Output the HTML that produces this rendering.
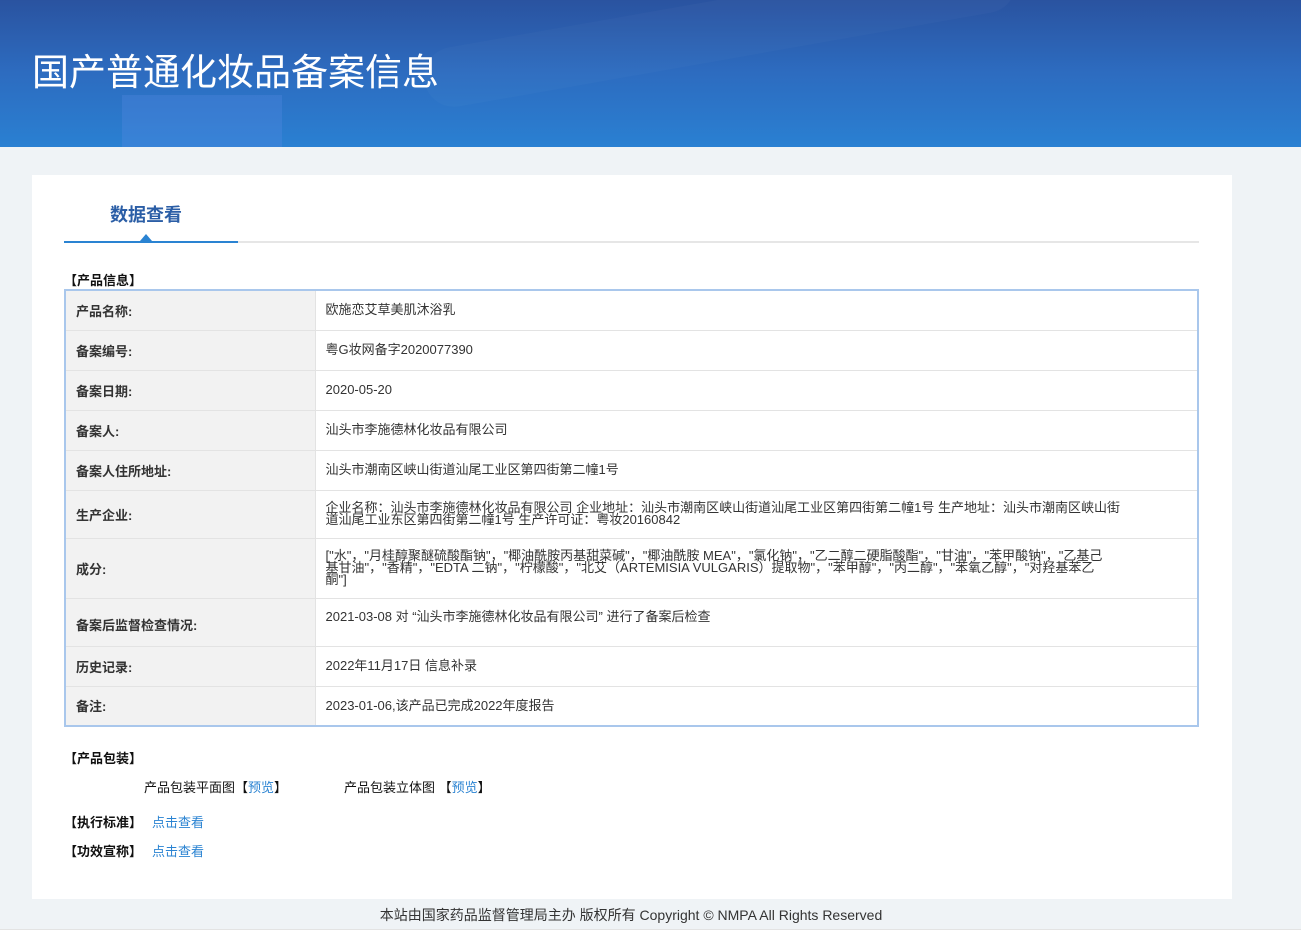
<!DOCTYPE html>
<html><head><meta charset="utf-8"><style>
*{margin:0;padding:0;box-sizing:border-box}
body{width:1301px;height:936px;background:#eff3f6;font-family:"Liberation Sans","Noto Sans CJK SC",sans-serif;position:relative;overflow:hidden;color:#333}
.hdr{position:absolute;left:0;top:0;width:1301px;height:147px;background:linear-gradient(180deg,#2a53a0 0%,#2d6cc0 50%,#2a80d2 100%);overflow:hidden}
.hdr .s1{position:absolute;left:122px;top:95px;width:160px;height:60px;background:rgba(90,140,230,.3)}
.hdr .s2{position:absolute;left:420px;top:0px;width:600px;height:60px;border-radius:30px;background:rgba(255,255,255,.025);transform:rotate(-10deg)}
.hdr h1{position:absolute;left:32px;top:50px;font-size:37px;font-weight:normal;color:#fff;line-height:46px}
.card{position:absolute;left:32px;top:175px;width:1200px;height:724px;background:#fff}
.tab{position:absolute;left:78px;top:26px;font-size:18px;font-weight:bold;color:#2b5ea6}
.line{position:absolute;left:32px;top:66px;width:1135px;height:2px;background:#e6e6e6}
.line b{position:absolute;left:0;top:0;width:174px;height:2px;background:#2a83d2}
.tri{position:absolute;left:108px;top:59px;width:0;height:0;border-left:6px solid transparent;border-right:6px solid transparent;border-bottom:7px solid #2a83d2}
.sec{position:absolute;font-size:13px;font-weight:bold;color:#111}
table{position:absolute;left:32px;top:114px;width:1135px;border-collapse:collapse;border:2px solid #a9c7ec;font-size:13px}
td{border-bottom:1px solid #e3e3e3;padding:0 10px;vertical-align:middle}
td.l{width:250px;background:#f2f2f2;font-weight:bold;color:#333;border-right:1px solid #e3e3e3}
td.v{color:#333;line-height:12px;white-space:nowrap}
a{color:#2a83d2;text-decoration:none}
.t{position:absolute;font-size:13px;color:#111}
.foot{position:absolute;left:0;top:905px;width:1262px;text-align:center;font-size:14px;color:#333}
.bot{position:absolute;left:0;top:929px;width:1301px;height:7px;background:#fff;border-top:1px solid #e3e3e3}
</style></head><body>
<div class="hdr"><div class="s2"></div><div class="s1"></div><h1>国产普通化妆品备案信息</h1></div>
<div class="card">
<div class="tab">数据查看</div>
<div class="line"><b></b></div><div class="tri"></div>
<div class="sec" style="left:32px;top:95px">【产品信息】</div>
<table>
<tr style="height:40px"><td class="l">产品名称:</td><td class="v">欧施恋艾草美肌沐浴乳</td></tr>
<tr style="height:40px"><td class="l">备案编号:</td><td class="v">粤G妆网备字2020077390</td></tr>
<tr style="height:40px"><td class="l">备案日期:</td><td class="v">2020-05-20</td></tr>
<tr style="height:40px"><td class="l">备案人:</td><td class="v">汕头市李施德林化妆品有限公司</td></tr>
<tr style="height:40px"><td class="l">备案人住所地址:</td><td class="v">汕头市潮南区峡山街道汕尾工业区第四街第二幢1号</td></tr>
<tr style="height:48px"><td class="l">生产企业:</td><td class="v">企业名称：汕头市李施德林化妆品有限公司 企业地址：汕头市潮南区峡山街道汕尾工业区第四街第二幢1号 生产地址：汕头市潮南区峡山街<br>道汕尾工业东区第四街第二幢1号 生产许可证：粤妆20160842</td></tr>
<tr style="height:60px"><td class="l">成分:</td><td class="v">["水"，"月桂醇聚醚硫酸酯钠"，"椰油酰胺丙基甜菜碱"，"椰油酰胺 MEA"，"氯化钠"，"乙二醇二硬脂酸酯"，"甘油"，"苯甲酸钠"，"乙基己<br>基甘油"，"香精"，"EDTA 二钠"，"柠檬酸"，"北艾（ARTEMISIA VULGARIS）提取物"，"苯甲醇"，"丙二醇"，"苯氧乙醇"，"对羟基苯乙<br>酮"]</td></tr>
<tr style="height:48px"><td class="l" style="padding-top:4px">备案后监督检查情况:</td><td class="v" style="vertical-align:top;padding-top:12px">2021-03-08 对 “汕头市李施德林化妆品有限公司” 进行了备案后检查</td></tr>
<tr style="height:40px"><td class="l">历史记录:</td><td class="v">2022年11月17日 信息补录</td></tr>
<tr style="height:40px"><td class="l">备注:</td><td class="v">2023-01-06,该产品已完成2022年度报告</td></tr>
</table>
<div class="sec" style="left:32px;top:573px">【产品包装】</div>
<div class="t" style="left:112px;top:602px">产品包装平面图【<a>预览</a>】</div>
<div class="t" style="left:312px;top:602px">产品包装立体图 【<a>预览</a>】</div>
<div class="sec" style="left:32px;top:637px">【执行标准】<a style="font-weight:normal;margin-left:10px">点击查看</a></div>
<div class="sec" style="left:32px;top:666px">【功效宣称】<a style="font-weight:normal;margin-left:10px">点击查看</a></div>
</div>
<div class="foot">本站由国家药品监督管理局主办 版权所有 Copyright © NMPA All Rights Reserved</div>
<div class="bot"></div>
</body></html>
